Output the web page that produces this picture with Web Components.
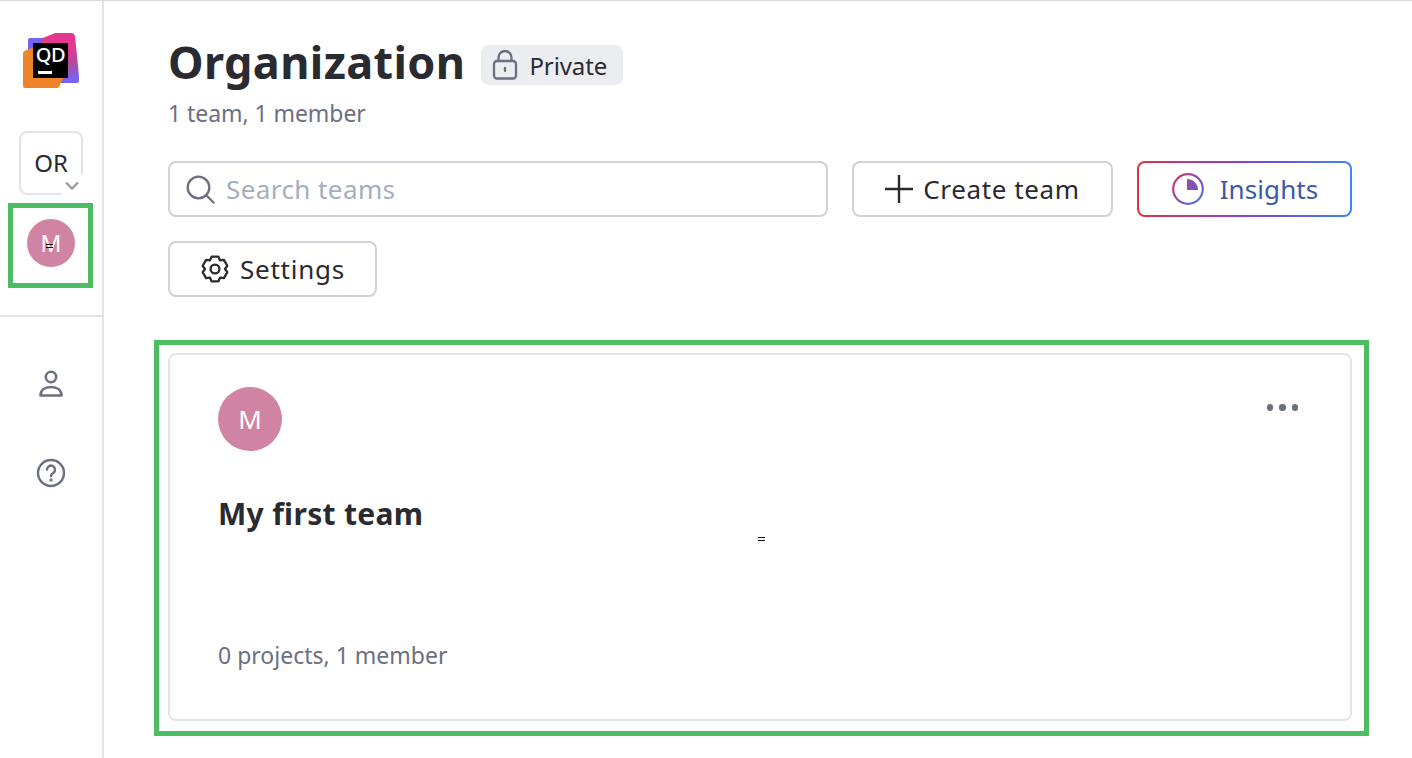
<!DOCTYPE html>
<html>
<head>
<meta charset="utf-8">
<style>
  html, body { margin: 0; height: 100%; background: #fff; }
  body { font-family: "Noto Sans", "Open Sans", sans-serif; color: #2a2a31; overflow: hidden; }
</style>
</head>
<body>
<qd-app>
  <qd-sidebar slot="side"></qd-sidebar>
  <qd-header slot="main" title="Organization" sub="1 team, 1 member"></qd-header>
  <qd-toolbar slot="main"></qd-toolbar>
  <qd-team-card slot="main" name="My first team" initial="M" info="0 projects, 1 member"></qd-team-card>
</qd-app>
<script>
const ICONS = {
  lock: '<svg width="26" height="30" viewBox="0 0 26 30" fill="none" stroke="#6c6f80" stroke-width="2.3"><rect x="2" y="11" width="22" height="17.500" rx="3"/><path d="M6.500 11V7.500a6.500 6.500 0 0 1 13 0V11"/><path d="M13 18v3" stroke-linecap="round"/></svg>',
  search: '<svg width="30" height="30" viewBox="0 0 30 30" fill="none" stroke="#6c6f80" stroke-width="2.3" stroke-linecap="round"><circle cx="12.500" cy="13.500" r="10.800"/><path d="M20.500 21.500l7 7"/></svg>',
  plus: '<svg width="28" height="28" viewBox="0 0 28 28" fill="none" stroke="#2a2a31" stroke-width="2.400"><path d="M14 0v28M0 14h28"/></svg>',
  gear: '<svg width="30" height="30" viewBox="0 0 30 30" fill="none" stroke="#2a2a31" stroke-width="2.300" stroke-linejoin="round"><path d="M11.600 3.200h6.800l1.600 3.600 3.900-.4 3.400 5.900-2.300 3.200 2.300 3.200-3.400 5.900-3.900-.4-1.600 3.600h-6.800l-1.600-3.600-3.900.4-3.400-5.900 2.300-3.200-2.300-3.200 3.400-5.900 3.900.4z" transform="translate(0 -.5)"/><circle cx="15" cy="15" r="4.400"/></svg>',
  insights: '<svg width="34" height="34" viewBox="0 0 34 34" fill="none"><defs><linearGradient id="g" x1="0" y1="0" x2="1" y2="1"><stop offset="0" stop-color="#d0356a"/><stop offset=".55" stop-color="#8450b8"/><stop offset="1" stop-color="#4f7fe0"/></linearGradient><linearGradient id="q" x1="0" y1="0" x2="1" y2="1"><stop offset="0" stop-color="#a3479f"/><stop offset="1" stop-color="#6d5ac2"/></linearGradient></defs><circle cx="17" cy="17" r="14.800" stroke="url(#g)" stroke-width="2.200"/><path d="M16 7a11 11 0 0 1 11 11H16z" fill="url(#q)"/></svg>',
  user: '<svg width="26" height="30" viewBox="0 0 26 30" fill="none" stroke="#6c6f80" stroke-width="2.600"><circle cx="13" cy="8" r="5.200"/><path d="M2.500 26.500c0-5 4-8.500 10.500-8.500s10.500 3.500 10.500 8.500z" stroke-linejoin="round"/></svg>',
  help: '<svg width="30" height="30" viewBox="0 0 30 30" fill="none" stroke="#6c6f80" stroke-width="2.400"><circle cx="15" cy="15" r="13"/><path d="M11 11.500a4 4 0 1 1 6.500 3.200c-1.500 1-2.500 1.800-2.500 3.300" stroke-linecap="round"/><circle cx="15" cy="22" r=".6" fill="#6c6f80"/></svg>'
};

class QdAvatar extends HTMLElement {
  constructor() {
    super();
    const size = this.getAttribute('size') || 64;
    this.attachShadow({ mode: 'open' }).innerHTML = `
      <style>
        :host { display: flex; align-items: center; justify-content: center; width: ${size}px; height: ${size}px;
          border-radius: 50%; background: #d183a4; color: #fff; font-size: ${size == 48 ? 23 : 26}px; flex: none; }
      </style><slot></slot>`;
  }
}

class QdSidebar extends HTMLElement {
  constructor() {
    super();
    this.attachShadow({ mode: 'open' }).innerHTML = `
      <style>
        :host { display: flex; flex-direction: column; align-items: center; position: relative; height: 100%;
          box-sizing: border-box; border-right: 2px solid #e1e5ea; }
        .logo { position: relative; width: 58px; height: 58px; margin-top: 31px; }
        .logo svg { display: block; }
        .qd { position: absolute; left: 11px; top: 13px; width: 35px; text-align: center; color: #fff;
          font-size: 20px; line-height: 22px; font-weight: 500; letter-spacing: -.5px; }
        .org { position: relative; box-sizing: border-box; width: 64px; height: 64px; margin-top: 42px; padding-bottom: 2px;
          border: 2px solid #e1e5ea; border-radius: 8px; display: flex; align-items: center; justify-content: center;
          font-size: 24px; }
        .chev { position: absolute; right: -2px; bottom: -2px; width: 22px; height: 20px; background: #fff;
          border-radius: 4px 0 0 0; display: flex; justify-content: center; align-items: center; }
        .team { margin-top: 24px; }
        hr { align-self: stretch; border: 0; border-top: 2px solid #e1e5ea; margin: 48px 0 0; }
        .user { margin-top: 52px; display: flex; }
        .help { margin-top: 59px; display: flex; }
        .frame { position: absolute; left: 8px; top: 203px; width: 85px; height: 85px; box-sizing: border-box;
          border: 5px solid #4dbc63; }
        .mark { position: absolute; left: 46px; top: 244px; width: 7px; height: 4px; box-sizing: border-box;
          border-top: 1px solid #111; border-bottom: 1px solid #111; }
      </style>
      <div class="logo">
        <svg width="58" height="58" viewBox="0 0 58 58">
          <defs>
            <linearGradient id="pk" x1=".3" y1="0" x2=".65" y2="1"><stop offset=".4" stop-color="#e5378f"/><stop offset=".72" stop-color="#b14ea0"/><stop offset="1" stop-color="#7563f5"/></linearGradient>
          </defs>
          <path d="M8 7H30V30H6V9Q6 7 8 7z" fill="#7563f5"/>
          <path d="M21 7 33 2H50Q52 2 53 5L57 45V50Q57 52 55 52H38L14 20z" fill="url(#pk)"/>
          <path d="M2.500 20 23 11 41 47 37 56Q36.500 57 35 57H3Q1 57 1 55V22Q1 21 2.500 20z" fill="#ee832c"/>
          <rect x="11" y="12" width="35" height="35" fill="#000"/>
          <rect x="16" y="40" width="14" height="3" fill="#fff"/>
        </svg>
        <span class="qd">QD</span>
      </div>
      <div class="org">OR
        <span class="chev"><svg width="14" height="9" viewBox="0 0 14 9" fill="none" stroke="#9a9ba3" stroke-width="2.400"><path d="M1 1.500l6 6 6-6"/></svg></span>
      </div>
      <div class="team"><qd-avatar size="48">M</qd-avatar></div>
      <hr>
      <span class="user">${ICONS.user}</span>
      <span class="help">${ICONS.help}</span>
      <div class="frame"></div>
      <div class="mark"></div>`;
  }
}

class QdHeader extends HTMLElement {
  constructor() {
    super();
    this.attachShadow({ mode: 'open' }).innerHTML = `
      <style>
        :host { display: block; padding-top: 35px; }
        .row { display: flex; align-items: center; gap: 16px; height: 54px; }
        h1 { margin: 0; font-size: 45px; line-height: 54px; font-weight: 700; letter-spacing: .38px; white-space: nowrap; }
        .chip { display: flex; align-items: center; gap: 11px; box-sizing: border-box; height: 40px; width: 142px; padding-left: 11px;
          background: #ecedf1; border-radius: 8px; font-size: 24px; letter-spacing: -.1px; margin-top: 6px; }
        p { margin: 8px 0 0; font-size: 23px; line-height: 32px; color: #6c6f80; letter-spacing: -.06px; }
      </style>
      <div class="row">
        <h1>${this.getAttribute('title')}</h1>
        <span class="chip">${ICONS.lock}<span>Private</span></span>
      </div>
      <p>${this.getAttribute('sub')}</p>`;
  }
}

class QdButton extends HTMLElement {
  constructor() {
    super();
    this.attachShadow({ mode: 'open' }).innerHTML = `
      <style>
        :host { display: inline-flex; align-items: center; justify-content: center; box-sizing: border-box; height: 56px;
          border: 2px solid #d1d1d9; border-radius: 8px; font-size: 26px; gap: 10px; background: #fff; white-space: nowrap; }
        :host([gradient]) { border-color: transparent; color: #3c5aa6; gap: 15px;
          background: linear-gradient(#fff, #fff) padding-box, linear-gradient(90deg, #e0343c 0%, #9b3cc0 40%, #6a4fe8 65%, #3f86f5 100%) border-box; }
      </style><slot name="icon"></slot><slot></slot>`;
  }
}

class QdToolbar extends HTMLElement {
  constructor() {
    super();
    this.attachShadow({ mode: 'open' }).innerHTML = `
      <style>
        :host { display: flex; flex-wrap: wrap; gap: 24px; margin-top: 32px; }
        .search { display: flex; align-items: center; gap: 10px; box-sizing: border-box; width: 660px; height: 56px; padding-left: 16px;
          border: 2px solid #d1d1d9; border-radius: 8px; font-size: 26px; color: #a6adbd; letter-spacing: .42px; }
        svg { display: block; }
        .create { width: 261px; letter-spacing: .62px; }
        .insights { width: 215px; letter-spacing: .1px; }
        .settings { width: 209px; letter-spacing: .75px; }
      </style>
      <div class="search">${ICONS.search}<span>Search teams</span></div>
      <qd-button class="create"><span slot="icon">${ICONS.plus}</span>Create team</qd-button>
      <qd-button class="insights" gradient><span slot="icon">${ICONS.insights}</span>Insights</qd-button>
      <qd-button class="settings"><span slot="icon">${ICONS.gear}</span>Settings</qd-button>`;
  }
}

class QdTeamCard extends HTMLElement {
  constructor() {
    super();
    this.attachShadow({ mode: 'open' }).innerHTML = `
      <style>
        :host { display: flex; flex-direction: column; position: relative; box-sizing: border-box; height: 368px; margin-top: 56px;
          padding: 32px 48px 0; border: 2px solid #e1e5ea; border-radius: 8px; }
        h2 { margin: 40px 0 0; font-size: 30px; line-height: 46px; font-weight: 700; letter-spacing: .32px; }
        .info { margin-top: auto; margin-bottom: 48px; font-size: 23px; line-height: 32px; color: #6c6f80; }
        .more { position: absolute; right: 52px; top: 49px; display: flex; gap: 6px; }
        .more i { width: 6.500px; height: 6.500px; border-radius: 50%; background: #6c6f80; }
        .frame { position: absolute; left: -16px; top: -15px; right: -19px; bottom: -17px; border: 5px solid #4dbc63; }
        .mark { position: absolute; left: 588px; top: 182px; width: 7px; height: 4px; box-sizing: border-box;
          border-top: 1px solid #111; border-bottom: 1px solid #111; }
      </style>
      <qd-avatar>${this.getAttribute('initial')}</qd-avatar>
      <h2>${this.getAttribute('name')}</h2>
      <div class="info">${this.getAttribute('info')}</div>
      <div class="more"><i></i><i></i><i></i></div>
      <div class="frame"></div>
      <div class="mark"></div>`;
  }
}

class QdApp extends HTMLElement {
  constructor() {
    super();
    this.attachShadow({ mode: 'open' }).innerHTML = `
      <style>
        :host { display: grid; grid-template-columns: 104px 1fr; height: 100vh; position: relative; }
        :host::before { content: ""; position: absolute; left: 0; right: 0; top: 0; height: 1px; background: #d9d9d9; z-index: 1; }
        main { padding: 0 60px 0 64px; min-width: 0; }
      </style>
      <div><slot name="side"></slot></div>
      <main><slot name="main"></slot></main>`;
  }
}

customElements.define('qd-avatar', QdAvatar);
customElements.define('qd-sidebar', QdSidebar);
customElements.define('qd-header', QdHeader);
customElements.define('qd-button', QdButton);
customElements.define('qd-toolbar', QdToolbar);
customElements.define('qd-team-card', QdTeamCard);
customElements.define('qd-app', QdApp);
</script>
</body>
</html>
